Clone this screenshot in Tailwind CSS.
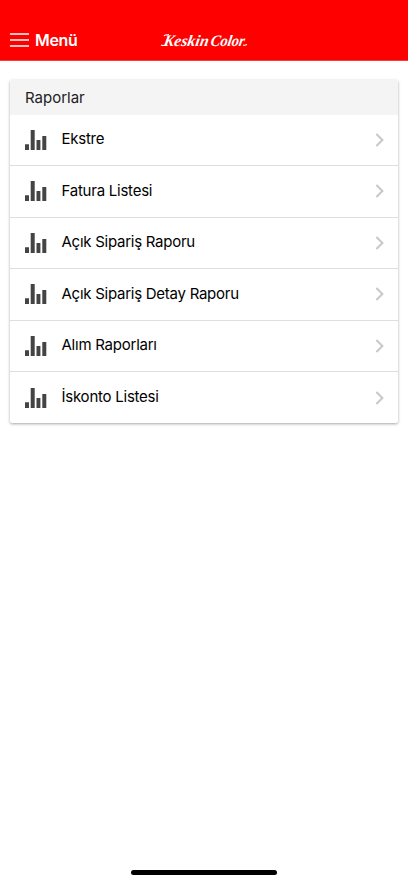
<!DOCTYPE html>
<html lang="tr">
<head>
<meta charset="utf-8">
<meta name="viewport" content="width=device-width, initial-scale=1">
<title>Raporlar</title>
<script src="https://cdn.jsdelivr.net/npm/@tailwindcss/browser@4"></script>
</head>
<body class="bg-white font-['Inter',sans-serif] text-black">
<svg class="hidden">
  <symbol id="bars" viewBox="0 0 22 20"><path fill="#444" d="M0 14.3h4V20H0zM5.7 0h4v20h-4zM11.5 10h3.9v10h-3.9zM17.3 6h4v14h-4z"/></symbol>
  <symbol id="chevron" viewBox="0 0 10 16"><path fill="none" stroke="#c8c8cb" stroke-width="2" d="M1.4 2l6 6-6 6"/></symbol>
</svg>
<div class="flex h-[883px] flex-col">
  <header class="grid h-[61px] shrink-0 grid-cols-[160px_88px_160px] border-b border-[#f04040] bg-[#ff0000] pt-[20px]">
    <div class="flex h-[40px] items-center gap-[6px] pl-[10px] text-white">
      <svg class="h-[14px] w-[19px]" viewBox="0 0 19 14" fill="none" stroke="#fff" stroke-width="1.7"><path d="M0 1h19M0 7h19M0 13h19"/></svg>
      <span class="text-[16px] font-semibold tracking-[-0.35px]">Menü</span>
    </div>
    <svg class="mt-[10px] h-[20px] w-[88px] overflow-visible" viewBox="0 0 88 20" fill="#fff"><g transform="translate(0 15.5) skewX(-10)" class="font-['Liberation_Serif',serif] text-[16px] font-bold italic"><text x="3" y="0" textLength="45" lengthAdjust="spacingAndGlyphs">Keskin</text><text x="50" y="0" textLength="34" lengthAdjust="spacingAndGlyphs">Color</text></g><path d="M1 15q2 1.2 5-.5M4 6q1-1.5 5-1.5M83 15q2 .6 4-.5" fill="none" stroke="#fff" stroke-width="1.1"/></svg>
  </header>
  <main class="mx-[10px] mt-[19px] rounded-[2px] bg-white shadow-[0_1px_3px_rgba(0,0,0,0.35)]">
    <h1 class="flex h-[34.5px] items-center rounded-t-[2px] bg-[#f4f4f4] pl-[15px] pt-[2px] text-[15px] text-[#222]">Raporlar</h1>
    <ul class="divide-y divide-[#dedede]">
      <li class="flex h-[51.5px] items-center px-[15px]"><svg class="h-[20px] w-[22px]"><use href="#bars"/></svg><span class="ml-[14.5px] flex-1 pb-[1.5px] text-[15px] tracking-[-0.24px]">Ekstre</span><svg class="-mr-[2px] h-[16px] w-[10px]"><use href="#chevron"/></svg></li>
      <li class="flex h-[51.5px] items-center px-[15px]"><svg class="h-[20px] w-[22px]"><use href="#bars"/></svg><span class="ml-[14.5px] flex-1 pb-[0.5px] text-[15px] tracking-[-0.24px]">Fatura Listesi</span><svg class="-mr-[2px] h-[16px] w-[10px]"><use href="#chevron"/></svg></li>
      <li class="flex h-[51.5px] items-center px-[15px]"><svg class="h-[20px] w-[22px]"><use href="#bars"/></svg><span class="ml-[14.5px] flex-1 pb-[1.5px] text-[15px] tracking-[-0.26px]">Açık Sipariş Raporu</span><svg class="-mr-[2px] h-[16px] w-[10px]"><use href="#chevron"/></svg></li>
      <li class="flex h-[51.5px] items-center px-[15px]"><svg class="h-[20px] w-[22px]"><use href="#bars"/></svg><span class="ml-[14.5px] flex-1 pb-[0.5px] text-[15px] tracking-[-0.26px]">Açık Sipariş Detay Raporu</span><svg class="-mr-[2px] h-[16px] w-[10px]"><use href="#chevron"/></svg></li>
      <li class="flex h-[51.5px] items-center px-[15px]"><svg class="h-[20px] w-[22px]"><use href="#bars"/></svg><span class="ml-[14.5px] flex-1 pb-[1.5px] text-[15px] tracking-[-0.24px]">Alım Raporları</span><svg class="-mr-[2px] h-[16px] w-[10px]"><use href="#chevron"/></svg></li>
      <li class="flex h-[51px] items-center px-[15px]"><svg class="h-[20px] w-[22px]"><use href="#bars"/></svg><span class="ml-[14.5px] flex-1 pb-[1px] text-[15px] tracking-[-0.24px]">İskonto Listesi</span><svg class="-mr-[2px] h-[16px] w-[10px]"><use href="#chevron"/></svg></li>
    </ul>
  </main>
  <div class="mx-auto mb-[8px] mt-auto h-[5px] w-[146px] rounded-full bg-black"></div>
</div>
</body>
</html>
